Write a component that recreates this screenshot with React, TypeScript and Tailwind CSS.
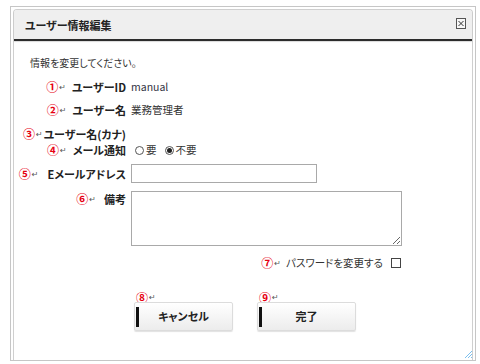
import type { ReactNode } from 'react'

const jp = "font-['Noto_Sans_CJK_JP',sans-serif]"
const palt = "[font-feature-settings:'palt']"

function Mark({ n, gap = 6 }: { n: string; gap?: number }) {
  return (
    <span className="inline-flex items-center" style={{ marginRight: gap }}>
      <span className="text-[#e60012] text-[12px] font-bold leading-none">{n}</span>
      <span className="text-[#555] text-[8px] leading-none font-['DejaVu_Sans',sans-serif] ml-[1px] mt-[2px]">↵</span>
    </span>
  )
}

function Row({
  mark,
  label,
  gap,
  className,
  top,
  children,
}: {
  mark: string
  label: string
  gap?: number
  className: string
  top?: boolean
  children?: ReactNode
}) {
  return (
    <div className={`flex ${top ? 'items-start' : 'items-center'} ${className}`}>
      <div className={`w-[112px] flex justify-end items-center ${top ? 'pt-[1px]' : ''}`}>
        <Mark n={mark} gap={gap} />
        <span className={`font-bold text-[11px] leading-[14px] text-[#222] ${palt}`}>{label}</span>
      </div>
      <div className="ml-[5px] flex items-center">{children}</div>
    </div>
  )
}

function Radio({ checked, label }: { checked?: boolean; label: string }) {
  return (
    <span className="inline-flex items-center mr-[8px]">
      <span className="w-[9px] h-[9px] rounded-full border border-[#555] bg-white flex items-center justify-center mr-[2px]">
        {checked && <span className="w-[5px] h-[5px] rounded-full bg-[#222]" />}
      </span>
      <span className="text-[10.5px] text-[#333]">{label}</span>
    </span>
  )
}

function Button({ mark, label, className }: { mark: string; label: string; className?: string }) {
  return (
    <div className={`flex flex-col ${className ?? ''}`}>
      <div className="h-[8px] pl-[2px] flex items-start">
        <span className="inline-flex items-center -mt-[2px]">
          <span className="text-[#e60012] text-[12px] font-bold leading-none">{mark}</span>
          <span className="text-[#555] text-[8px] leading-none font-['DejaVu_Sans',sans-serif] ml-[1px]">↵</span>
        </span>
      </div>
      <button className="relative w-[99px] h-[29px] rounded-[2px] border border-[#dcdcdc] bg-gradient-to-b from-white to-[#ececec] shadow-[0_1px_1px_rgba(0,0,0,0.12)] flex items-center justify-center">
        <span className="absolute left-[1px] top-[4px] w-[3px] h-[20px] bg-[#111]" />
        <span className={`font-bold text-[11px] text-[#222] ${palt}`}>{label}</span>
      </button>
    </div>
  )
}

export default function App() {
  return (
    <div className={`w-[480px] h-[364px] bg-white pt-[6px] pl-[10px] ${jp}`}>
      <div className="relative w-[466px] h-[355px] border border-[#c6c6c6] flex flex-col pt-[2px] px-[2px]">
        <div className="flex-1 flex flex-col border-x border-t border-[#cfcfcf] rounded-t-[4px]">
          <div className="h-[31px] bg-[#efefef] border-b-2 border-[#2c2c2c] rounded-t-[3px] shadow-[0_1px_1px_rgba(0,0,0,0.15)] flex items-center justify-between pl-[11px] pr-[6px] pt-[2px]">
            <span className={`font-bold text-[11px] text-[#222] ${palt}`}>ユーザー情報編集</span>
            <svg width="10" height="11" viewBox="0 0 10 11" className="-mt-[4px]">
              <rect x="0.5" y="0.5" width="9" height="10" fill="#f7f7f7" stroke="#555" />
              <path d="M2.5 3 L7.5 8 M7.5 3 L2.5 8" stroke="#333" strokeWidth="1" />
            </svg>
          </div>

          <div className="flex flex-col">
            <div className={`pl-[16px] pt-[15px] text-[10px] leading-[14px] text-[#333] ${palt}`}>
              情報を変更してください。
            </div>

            <Row mark="①" label="ユーザーID" className="mt-[6px] h-[22px]">
              <span className="text-[10.5px] text-[#334]">manual</span>
            </Row>
            <Row mark="②" label="ユーザー名" className="h-[24px]">
              <span className="text-[10.5px] text-[#333]">業務管理者</span>
            </Row>
            <Row mark="③" label="ユーザー名(カナ)" gap={1} className="mt-[3px] h-[17px]" />
            <Row mark="④" label="メール通知" className="h-[16px]">
              <span className="flex items-center ml-[4px]">
                <Radio label="要" />
                <Radio checked label="不要" />
              </span>
            </Row>
            <Row mark="⑤" label="Eメールアドレス" gap={9} className="mt-[6px] h-[19px]">
              <input className="w-[186px] h-[19px] border border-[#a9a9a9] bg-white outline-none" />
            </Row>
            <Row mark="⑥" label="備考" gap={8} top className="mt-[8px]">
              <textarea className="w-[271px] h-[55px] border border-[#a9a9a9] bg-white outline-none resize" />
            </Row>

            <div className="mt-[10px] h-[14px] flex items-center justify-end w-[387px]">
              <Mark n="⑦" gap={5} />
              <span className={`text-[10.5px] text-[#333] ${palt}`}>パスワードを変更する</span>
              <span className="ml-[8px] w-[10px] h-[10px] border border-[#444] bg-white" />
            </div>

            <div className="mt-[24px] flex pl-[120px] gap-[24px]">
              <Button mark="⑧" label="キャンセル" />
              <Button mark="⑨" label="完了" />
            </div>
          </div>
        </div>

        <svg width="9" height="9" viewBox="0 0 9 9" className="absolute right-[2px] bottom-[1px]">
          <path d="M8 1 L1 8 M8 4 L4 8 M8 7 L7 8" stroke="#7cc0ee" strokeWidth="1" />
        </svg>
      </div>
    </div>
  )
}
